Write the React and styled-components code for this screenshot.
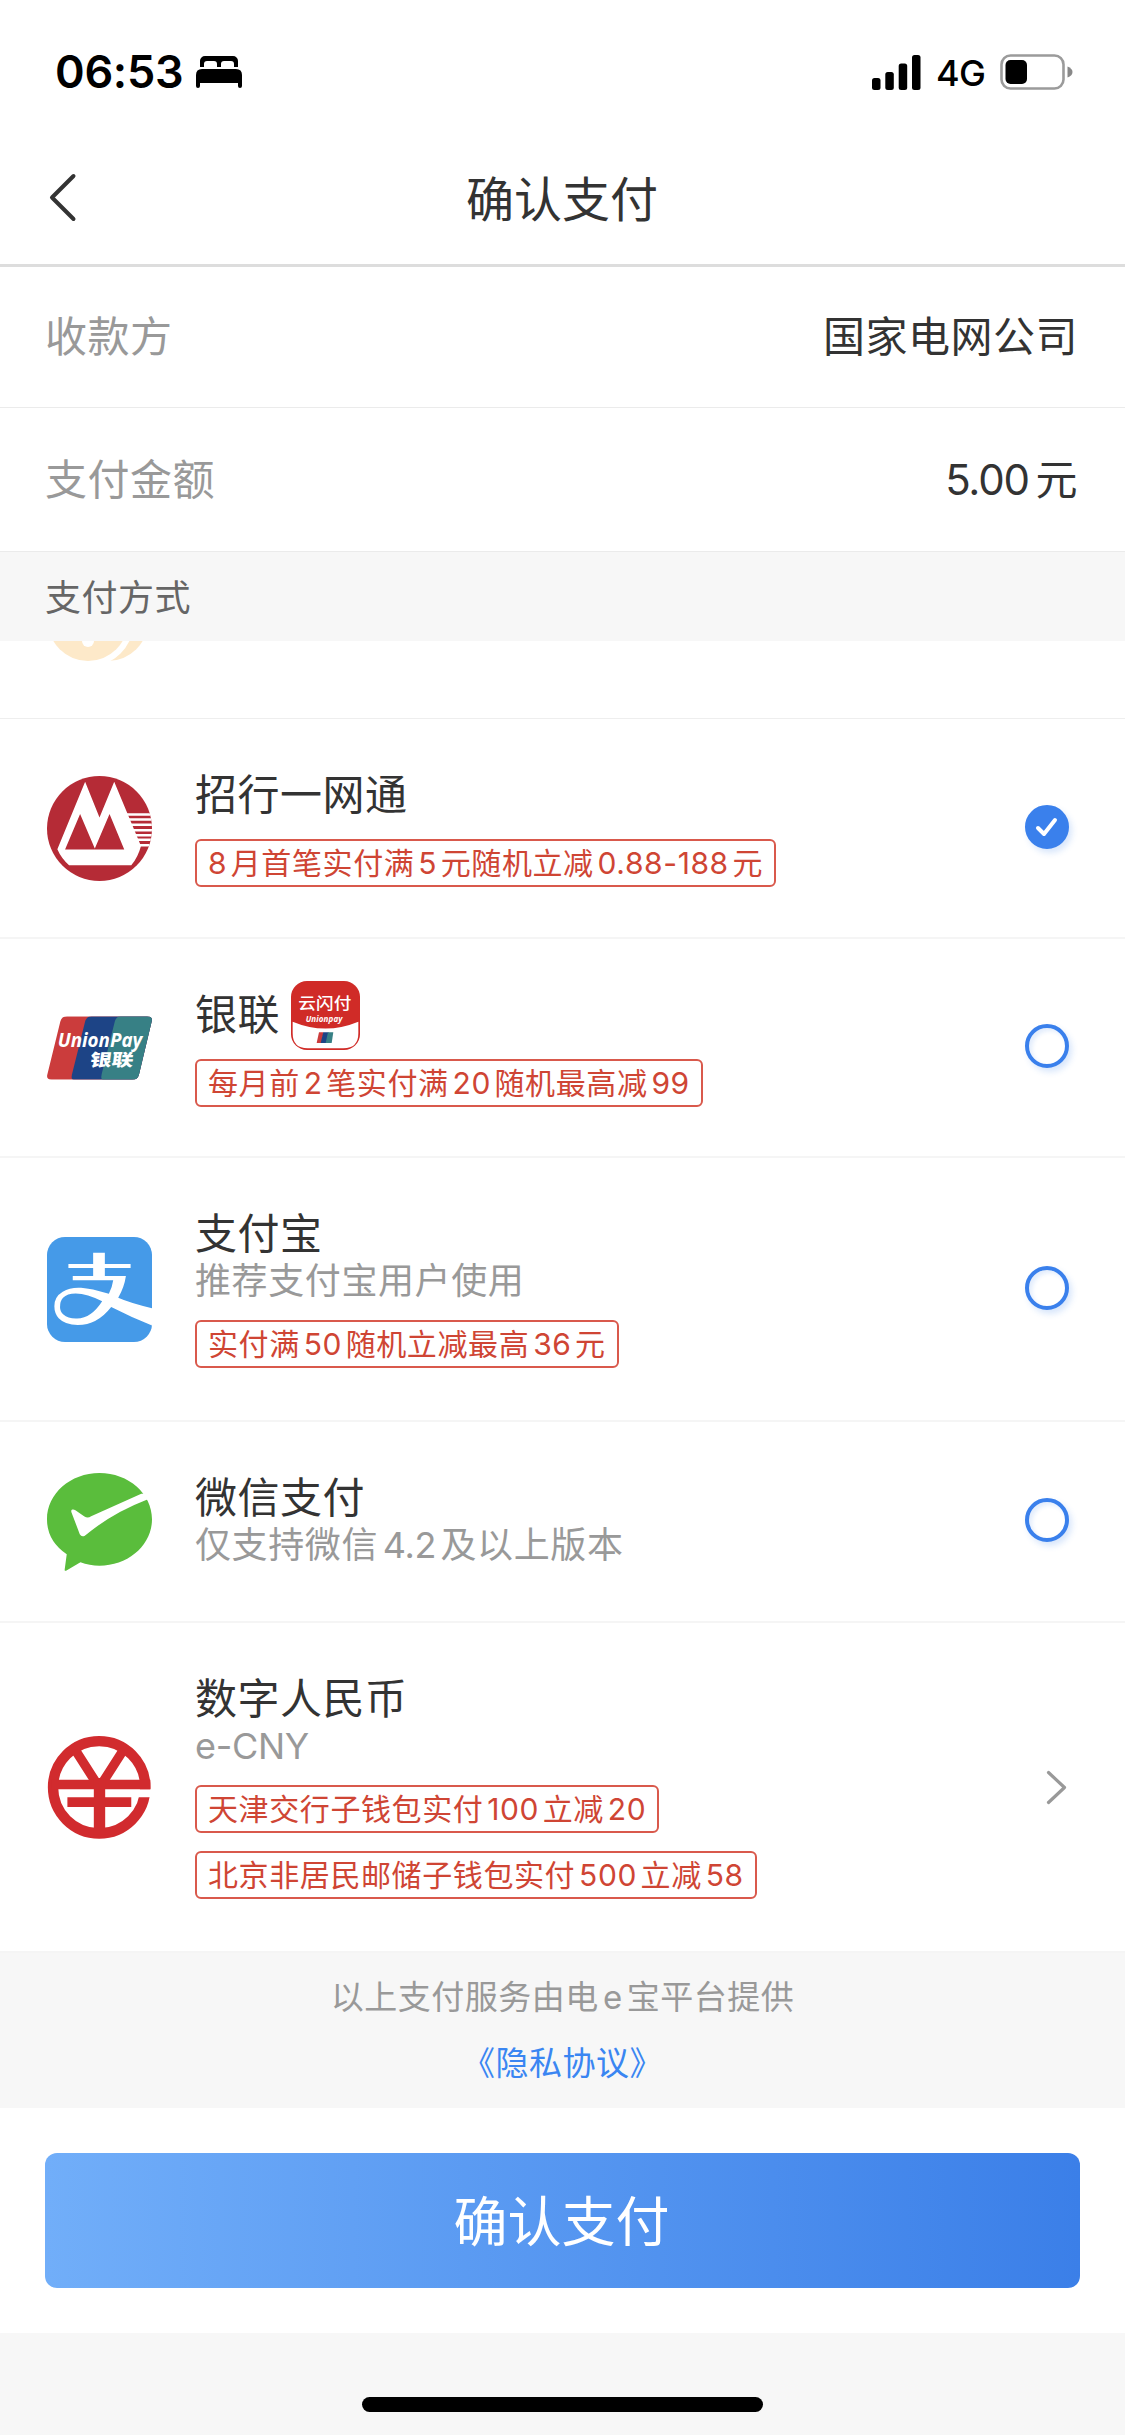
import React, { useState } from "react";
import styled, { createGlobalStyle } from "styled-components";

const GlobalStyle = createGlobalStyle`
  * {
    box-sizing: border-box;
  }
  body {
    margin: 0;
    background: #f7f7f7;
    color: #333;
    font-family: Inter, "Noto Sans CJK SC", sans-serif;
    text-autospace: no-autospace;
  }
  svg {
    display: block;
    flex-shrink: 0;
  }
`;

const Page = styled.div`
  width: 1125px;
  height: 2435px;
  display: flex;
  flex-direction: column;
  overflow: hidden;
`;

const StatusBar = styled.div`
  height: 132px;
  padding: 12px 52px 0 55px;
  display: flex;
  align-items: center;
  background: #fff;
  color: #000;
`;

const Clock = styled.div`
  width: 141px;
  font-size: 45px;
  font-weight: 600;
  letter-spacing: -0.3px;
  line-height: 60px;
`;

const Network = styled.div`
  margin: 2px 15px 0 15px;
  font-size: 36px;
  font-weight: 500;
  letter-spacing: -0.8px;
`;

const Spacer = styled.div`
  flex: 1;
`;

const NavBar = styled.div`
  height: 135px;
  padding: 0 48px 0 47px;
  display: grid;
  grid-template-columns: 60px 1fr 60px;
  align-items: center;
  background: #fff;
  border-bottom: 3px solid #ddd;
`;

const NavTitle = styled.div`
  padding-top: 3px;
  text-align: center;
  font-size: 48px;
  line-height: 66px;
`;

const InfoRow = styled.div`
  height: ${props => props.height}px;
  padding: 0 47px 7px 45px;
  display: flex;
  align-items: center;
  justify-content: space-between;
  background: #fff;
  border-bottom: 1px solid #ebebeb;
  font-size: 42px;
  letter-spacing: 0.5px;
`;

const InfoLabel = styled.div`
  color: #999;
`;

const InfoValue = styled.div`
  color: #333;
`;

const SectionTitle = styled.div`
  height: 89px;
  padding: 1px 45px 0;
  line-height: 90px;
  font-size: 36px;
  letter-spacing: 0.5px;
  color: #666;
`;

const MethodList = styled.div`
  display: flex;
  flex-direction: column;
  background: #fff;
`;

const PeekRow = styled.div`
  height: 78px;
  padding: 0 47px;
  border-bottom: 1px solid #eee;
`;

const MethodRow = styled.div`
  height: ${props => props.height}px;
  padding: 0 56px 0 47px;
  display: flex;
  align-items: center;
  border-bottom: 2px solid #f5f5f5;
  cursor: pointer;
`;

const MethodBody = styled.div`
  flex: 1;
  align-self: flex-start;
  display: flex;
  flex-direction: column;
  align-items: flex-start;
  padding: 47px 0 0 43px;
`;

const MethodName = styled.div`
  height: 58px;
  display: flex;
  align-items: center;
  gap: 11px;
  font-size: 42px;
  line-height: 58px;
  letter-spacing: 0.5px;
`;

const MethodNote = styled.div`
  margin-bottom: 6px;
  font-size: 36px;
  line-height: 36px;
  letter-spacing: 0.6px;
  color: #999;
`;

const Tags = styled.div`
  display: flex;
  flex-direction: column;
  align-items: flex-start;
  gap: 18px;
  padding-top: 15px;
`;

const Tag = styled.div`
  height: 48px;
  padding: 0 11px;
  border: 2px solid #d9594c;
  border-radius: 6px;
  font-size: 30px;
  line-height: 45px;
  letter-spacing: 0.6px;
  color: #cf4534;
  white-space: nowrap;
`;

const Latin = styled.span`
  margin-left: ${props => (props.first ? "0" : "0.13em")};
  margin-right: ${props => (props.last ? "0" : "0.12em")};

  ${Tag} & {
    letter-spacing: 0.6px;
  }
  ${MethodNote} & {
    letter-spacing: -0.3px;
  }
  ${InfoValue} & {
    margin-right: 0.16em;
    letter-spacing: -1.2px;
  }
`;

const Radio = styled.div`
  width: 44px;
  height: 44px;
  margin-bottom: 3px;
  display: flex;
  align-items: center;
  justify-content: center;
  border: 4px solid #3a80ec;
  border-radius: 50%;
  background: ${props => (props.checked ? "#3a80ec" : "#fff")};
  box-shadow: 3px 4px 6px rgba(58, 128, 236, 0.2)
    ${props => (props.checked ? "" : ", inset 3px 3px 4px rgba(58, 128, 236, 0.14)")};
`;

const Footer = styled.div`
  height: 155px;
  padding-top: 11px;
  text-align: center;
  font-size: 33px;
  line-height: 66px;
  letter-spacing: 0.5px;
  color: #999;
`;

const Agreement = styled.div`
  color: #3a86f2;
`;

const ActionBar = styled.div`
  padding: 45px;
  background: #fff;
`;

const PayButton = styled.button`
  display: block;
  width: 100%;
  height: 135px;
  padding: 0 2px 5px 0;
  border: 0;
  border-radius: 12px;
  background: linear-gradient(to right, #71aef9, #3b7fe8);
  color: #fff;
  font-family: inherit;
  font-size: 54px;
`;

const HomeArea = styled.div`
  flex: 1;
  display: flex;
  justify-content: center;
  align-items: flex-end;
  padding-bottom: 23px;
`;

const HomeIndicator = styled.div`
  width: 401px;
  height: 15px;
  border-radius: 8px;
  background: #000;
`;

// adds a thin gap between Chinese and latin runs
function Mixed({ children }) {
  const parts = children.split(/([\w.\-]+)/).filter(Boolean);
  return parts.map((part, i) =>
    /^[\w.\-]+$/.test(part) ? (
      <Latin key={i} first={i === 0 ? 1 : 0} last={i === parts.length - 1 ? 1 : 0}>
        {part}
      </Latin>
    ) : (
      <React.Fragment key={i}>{part}</React.Fragment>
    )
  );
}

const BedIcon = () => (
  <svg width="46" height="32" viewBox="0 0 46 32">
    <path d="M4 11V5a5 5 0 0 1 5-5h28a5 5 0 0 1 5 5v6h-4V8q0-3-3-3h-7q-3 0-3 3v3h-4V8q0-3-3-3h-7q-3 0-3 3v3z" />
    <path d="M0 30V19q0-6 6-6h34q6 0 6 6v11q0 2-2 2t-2-2v-3H4v3q0 2-2 2t-2-2z" />
  </svg>
);

const SignalIcon = () => (
  <svg width="49" height="35" viewBox="0 0 49 35">
    <rect x="0" y="23" width="8.5" height="12" rx="2.5" />
    <rect x="13.3" y="17" width="8.5" height="18" rx="2.5" />
    <rect x="26.7" y="8.5" width="8.5" height="26.5" rx="2.5" />
    <rect x="40" y="0" width="8.5" height="35" rx="2.5" />
  </svg>
);

const BatteryIcon = () => (
  <svg width="73" height="36" viewBox="0 0 73 36">
    <rect x="1.5" y="1.5" width="62" height="33" rx="9" fill="none" stroke="#9b9b9b" strokeWidth="2.6" />
    <rect x="5.5" y="6" width="21.5" height="24" rx="5" />
    <path d="M67.5 12.5q5 2 5 5.5t-5 5.5z" fill="#888" />
  </svg>
);

const BackIcon = () => (
  <svg width="30" height="50" viewBox="0 0 30 50">
    <path d="M26.5 3 5 24.5l21.5 21.5" fill="none" stroke="#333" strokeWidth="4" strokeLinecap="round" strokeLinejoin="round" />
  </svg>
);

const ArrowIcon = () => (
  <svg width="24" height="38" viewBox="0 0 24 38">
    <path d="M3.500 4.500l16 15-16 15" fill="none" stroke="#999" strokeWidth="3.2" strokeLinecap="round" strokeLinejoin="round" />
  </svg>
);

const CheckIcon = () => (
  <svg width="26" height="22" viewBox="0 0 26 22">
    <path d="M4 12l6 6L21 4" fill="none" stroke="#fff" strokeWidth="4" strokeLinecap="round" strokeLinejoin="round" />
  </svg>
);

const CoinIcon = () => (
  <svg width="105" height="21" viewBox="47 641 105 21">
    <circle cx="108" cy="621" r="40" fill="#fde9c9" />
    <circle cx="88" cy="621" r="46" fill="#fff" />
    <circle cx="88" cy="621" r="40" fill="#fde9c9" />
    <circle cx="88" cy="641" r="6" fill="#fff" />
  </svg>
);

const CmbIcon = () => (
  <svg width="105" height="105" viewBox="0 0 314 314">
    <defs>
      <clipPath id="cmb-clip">
        <circle cx="157" cy="157" r="157" />
      </clipPath>
    </defs>
    <g clipPath="url(#cmb-clip)">
      <rect width="314" height="314" fill="#b52b36" />
      <path
        d="M235 115h79M242 130h72M249 146h65M255 162h59M261 177h53M267 191h47M272 207h42"
        stroke="#fff"
        strokeWidth="7.5"
      />
      <path d="M114 17l43 107 44-107 80 192q-8 32-29 58H66Q42 245 31 219z" fill="#fff" />
      <path d="M54 220l45-106 44 103 44-103 44 106z" fill="#b52b36" />
    </g>
  </svg>
);

const UnionPayIcon = () => (
  <svg width="105" height="64" viewBox="0 0 315 191">
    <defs>
      <clipPath id="up-clip">
        <path d="M60 0h240q18 0 14 16l-38 159q-4 16-20 16H14q-17 0-13-16L40 16Q44 0 60 0z" />
      </clipPath>
    </defs>
    <g clipPath="url(#up-clip)">
      <rect width="315" height="191" fill="#cb3c3c" />
      <path d="M315 0H134q-15 0-19 14L75 174q-4 17 6 17h234z" fill="#1d4486" />
      <path d="M315 0H222q-14 0-18 14l-40 160q-4 17 6 17h145z" fill="#378085" />
    </g>
    <g fill="#fff">
      <text x="32" y="94" fontFamily="Open Sans, sans-serif" fontSize="58" fontWeight="700" fontStyle="italic" textLength="254" lengthAdjust="spacingAndGlyphs">
        UnionPay
      </text>
      <text transform="translate(127 149) skewX(-8)" fontFamily="Noto Sans CJK SC, sans-serif" fontSize="51" fontWeight="900" textLength="130" lengthAdjust="spacingAndGlyphs">
        银联
      </text>
    </g>
  </svg>
);

const QuickPassIcon = () => (
  <svg width="69" height="69" viewBox="0 0 207 207">
    <rect width="207" height="207" rx="48" fill="#d02b27" />
    <path d="M5 122q98 41 197 0v35q0 45-45 45H50q-45 0-45-45z" fill="#fff" />
    <g fill="#fff">
      <text x="22" y="84" fontFamily="Noto Sans CJK SC, sans-serif" fontSize="48" fontWeight="500" textLength="160" lengthAdjust="spacingAndGlyphs">
        云闪付
      </text>
      <text x="44" y="122" fontFamily="Open Sans, sans-serif" fontSize="24" fontWeight="700" fontStyle="italic" textLength="111">
        Unionpay
      </text>
    </g>
    <path d="M84 154h14l-6 32H77z" fill="#cb3c3c" />
    <path d="M97 154h16l-6 32H89z" fill="#1d4486" />
    <path d="M111 154h16l-5 32h-18z" fill="#378085" />
  </svg>
);

const AlipayIcon = () => (
  <svg width="105" height="105" viewBox="0 0 314 314">
    <defs>
      <clipPath id="ali-clip">
        <rect width="314" height="314" rx="54" />
      </clipPath>
    </defs>
    <g clipPath="url(#ali-clip)">
      <rect width="314" height="314" fill="#459ae8" />
      <path
        fill="#fff"
        fillRule="evenodd"
        d="M138 47h35v34h77v12h-77v24h63q-5 34-23 65 36 16 104 32v52q-66-27-125-57-42 54-100 54-38 0-57-20-13-15-13-36 0-28 25-43 22-14 55-12 30 2 83 18 10-20 13-41H77v-12h61V93H64V81h74zM165 192q-45-22-79-23-26 0-38 13-9 9-9 28 0 13 10 22 14 13 41 12 43-2 75-52z"
      />
    </g>
  </svg>
);

const WeChatPayIcon = () => (
  <svg width="105" height="98" viewBox="0 0 314 293">
    <path d="M157 0c87 0 157 62 157 138.5S244 277 157 277q-30 0-57-10l-43 25q-5 2-4-4l6-45Q0 203 0 138.5C0 62 70 0 157 0z" fill="#5abd3c" />
    <path d="M76 109q-5 1-3 8l25 66q5 9 14 5 8-5 20-15 70-56 168-94l10-18-28 1-150 67q-10 8-20 1l-27-19q-5-3-9-2z" fill="#fff" />
  </svg>
);

const EcnyIcon = () => (
  <svg width="105" height="103" viewBox="-3 0 314 307">
    <circle cx="153" cy="153" r="138" fill="#fff" stroke="#d12b2e" strokeWidth="31" />
    <path d="M186 159h130v24H186z" fill="#fff" />
    <path d="M82 42l62 97M225 42l-62 97" stroke="#d12b2e" strokeWidth="28" />
    <path d="M10 130h296v29H10zM58 183h191v29H58z" fill="#d12b2e" />
    <path d="M137 125h34v170h-34z" fill="#d12b2e" />
  </svg>
);

const methods = [
  {
    id: "cmb",
    icon: CmbIcon,
    name: "招行一网通",
    tags: ["8月首笔实付满5元随机立减0.88-188元"],
    height: 220
  },
  {
    id: "unionpay",
    icon: UnionPayIcon,
    name: "银联",
    badge: QuickPassIcon,
    tags: ["每月前2笔实付满20随机最高减99"],
    height: 219
  },
  {
    id: "alipay",
    icon: AlipayIcon,
    name: "支付宝",
    note: "推荐支付宝用户使用",
    tags: ["实付满50随机立减最高36元"],
    height: 264
  },
  {
    id: "wechat",
    icon: WeChatPayIcon,
    name: "微信支付",
    note: "仅支持微信4.2及以上版本",
    height: 201
  },
  {
    id: "ecny",
    icon: EcnyIcon,
    name: "数字人民币",
    note: "e-CNY",
    tags: ["天津交行子钱包实付100立减20", "北京非居民邮储子钱包实付500立减58"],
    link: true,
    height: 330
  }
];

function PaymentMethod({ method, checked, onSelect }) {
  const Icon = method.icon;
  const Badge = method.badge;
  return (
    <MethodRow height={method.height} onClick={onSelect}>
      <Icon />
      <MethodBody>
        <MethodName>
          {method.name}
          {Badge && <Badge />}
        </MethodName>
        {method.note && (
          <MethodNote>
            <Mixed>{method.note}</Mixed>
          </MethodNote>
        )}
        {method.tags && (
          <Tags>
            {method.tags.map(tag => (
              <Tag key={tag}>
                <Mixed>{tag}</Mixed>
              </Tag>
            ))}
          </Tags>
        )}
      </MethodBody>
      {method.link ? <ArrowIcon /> : <Radio checked={checked}>{checked && <CheckIcon />}</Radio>}
    </MethodRow>
  );
}

function App() {
  const [selected, setSelected] = useState("cmb");

  return (
    <Page>
      <GlobalStyle />
      <StatusBar>
        <Clock>06:53</Clock>
        <BedIcon />
        <Spacer />
        <SignalIcon />
        <Network>4G</Network>
        <BatteryIcon />
      </StatusBar>
      <NavBar>
        <BackIcon />
        <NavTitle>确认支付</NavTitle>
      </NavBar>
      <InfoRow height={141}>
        <InfoLabel>收款方</InfoLabel>
        <InfoValue>国家电网公司</InfoValue>
      </InfoRow>
      <InfoRow height={144}>
        <InfoLabel>支付金额</InfoLabel>
        <InfoValue>
          <Mixed>5.00元</Mixed>
        </InfoValue>
      </InfoRow>
      <SectionTitle>支付方式</SectionTitle>
      <MethodList>
        <PeekRow>
          <CoinIcon />
        </PeekRow>
        {methods.map(method => (
          <PaymentMethod
            key={method.id}
            method={method}
            checked={selected === method.id}
            onSelect={() => !method.link && setSelected(method.id)}
          />
        ))}
      </MethodList>
      <Footer>
        <div>
          <Mixed>以上支付服务由电e宝平台提供</Mixed>
        </div>
        <Agreement>《隐私协议》</Agreement>
      </Footer>
      <ActionBar>
        <PayButton>确认支付</PayButton>
      </ActionBar>
      <HomeArea>
        <HomeIndicator />
      </HomeArea>
    </Page>
  );
}

export default App;
